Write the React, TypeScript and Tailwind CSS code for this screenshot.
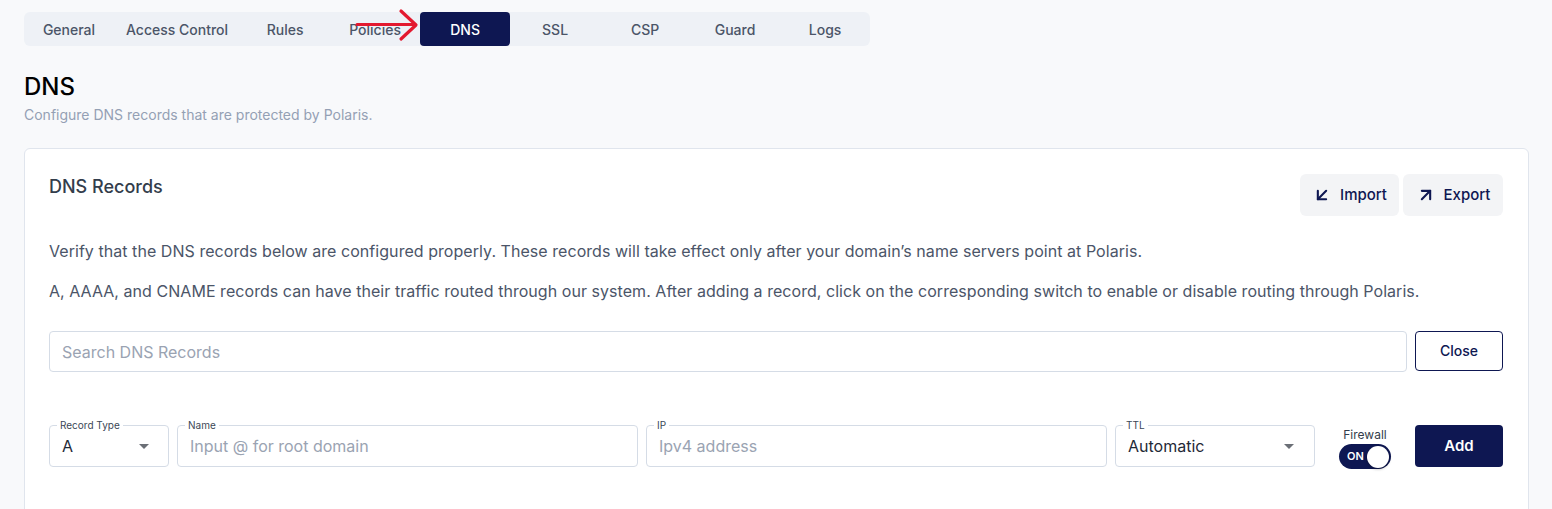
import { ArrowDownLeft, ArrowUpRight } from 'lucide-react'

const NAVY = 'bg-[#0e1752]'

const tabs = ['General', 'Access Control', 'Rules', 'Policies', 'DNS', 'SSL', 'CSP', 'Guard', 'Logs']

function TabBar({ active }: { active: string }) {
  return (
    <div className="relative inline-flex rounded-md bg-[#eef1f6]">
      {tabs.map((tab) => (
        <button
          key={tab}
          type="button"
          className={`h-[34px] min-w-[90px] rounded-[4px] px-3 pt-[2px] text-sm font-medium ${
            tab === active ? `${NAVY} text-white` : 'text-[#4b5568]'
          }`}
        >
          {tab}
        </button>
      ))}
      {/* annotation arrow pointing at the active tab */}
      <svg
        className="pointer-events-none absolute left-[330px] top-[-4px]"
        width="66"
        height="34"
        viewBox="0 0 66 34"
        fill="none"
      >
        <path d="M3 16.5 H61" stroke="#e3192f" strokeWidth="3" strokeLinecap="round" />
        <path d="M47 3 L62 17 L47 31" stroke="#e3192f" strokeWidth="3.2" strokeLinecap="round" strokeLinejoin="round" />
      </svg>
    </div>
  )
}

function OutlinedField({
  label,
  className,
  children,
}: {
  label: string
  className?: string
  children: React.ReactNode
}) {
  return (
    <div className={`relative flex h-[42px] items-center rounded-[4px] border border-[#d5dce6] bg-white ${className ?? ''}`}>
      <span className="absolute left-[7px] top-[-8px] bg-white px-[3px] text-[10px] leading-[14px] text-[#3b4756]">
        {label}
      </span>
      {children}
    </div>
  )
}

function Caret() {
  return (
    <svg width="12" height="7" viewBox="0 0 12 7" className="shrink-0">
      <path d="M1 1 L6 6 L11 1 Z" fill="#6b6f76" />
    </svg>
  )
}

export default function App() {
  return (
    <div
      className="min-h-screen bg-[#f8f9fb] px-6 pt-3"
      style={{ fontFamily: 'Inter, "Noto Sans", sans-serif' }}
    >
      <TabBar active="DNS" />

      <h1 className="mt-[25px] text-2xl font-medium leading-8 text-black">DNS</h1>
      <p className="mt-[2px] text-sm leading-5 text-[#94a0b4]">
        Configure DNS records that are protected by Polaris.
      </p>

      <section className="-mr-px mt-[23px] rounded-md border border-[#e0e5ed] bg-white pl-6 pr-[25px] pt-[25px] pb-16">
        <div className="flex items-start justify-between">
          <h2 className="text-lg font-medium leading-[26px] text-[#333d4b]">DNS Records</h2>
          <div className="flex gap-1">
            <button
              type="button"
              className="flex h-[42px] w-[99px] items-center justify-center gap-2 rounded-md bg-[#f3f4f6] text-[15px] font-medium text-[#0e1752]"
            >
              <ArrowDownLeft size={20} strokeWidth={2.5} />
              Import
            </button>
            <button
              type="button"
              className="flex h-[42px] w-[100px] items-center justify-center gap-2 rounded-md bg-[#f3f4f6] text-[15px] font-medium text-[#0e1752]"
            >
              <ArrowUpRight size={20} strokeWidth={2.5} />
              Export
            </button>
          </div>
        </div>

        <p className="mt-[23px] text-base leading-6 tracking-[0.003em] text-[#4b5568]">
          Verify that the DNS records below are configured properly. These records will take effect only after your
          domain’s name servers point at Polaris.
        </p>
        <p className="mt-4 text-base leading-6 tracking-[0.003em] text-[#4b5568]">
          A, AAAA, and CNAME records can have their traffic routed through our system. After adding a record, click on
          the corresponding switch to enable or disable routing through Polaris.
        </p>

        <div className="mt-7 flex gap-2">
          <input
            placeholder="Search DNS Records"
            className="h-[41px] flex-1 rounded-[4px] border border-[#d5dce6] px-3 text-base text-[#1f2937] placeholder:text-[#9aa3b2] focus:outline-none"
          />
          <button
            type="button"
            className="h-[40px] w-[88px] rounded-[4px] border border-[#0e1752] text-sm font-medium text-[#0e1752]"
          >
            Close
          </button>
        </div>

        <div className="mt-[53px] flex items-start gap-2">
          <OutlinedField label="Record Type" className="w-[120px] justify-between pl-3 pr-[18px]">
            <span className="text-base text-[#1f2937]">A</span>
            <Caret />
          </OutlinedField>
          <OutlinedField label="Name" className="flex-1 px-3">
            <span className="text-base text-[#9aa3b2]">Input @ for root domain</span>
          </OutlinedField>
          <OutlinedField label="IP" className="flex-1 px-3">
            <span className="text-base text-[#9aa3b2]">Ipv4 address</span>
          </OutlinedField>
          <OutlinedField label="TTL" className="w-[200px] justify-between pl-3 pr-[19px]">
            <span className="text-base text-[#1f2937]">Automatic</span>
            <Caret />
          </OutlinedField>

          <div className="flex w-[84px] flex-col items-center pt-[2px]">
            <span className="text-xs leading-4 text-[#333d4b]">Firewall</span>
            <div className={`mt-[1px] flex h-[25px] w-[52px] items-center justify-between rounded-full ${NAVY} pl-[8px] pr-[2px]`}>
              <span className="text-[11px] font-semibold text-white">ON</span>
              <span className="h-[22px] w-[22px] rounded-full bg-white shadow-[0_1px_3px_rgba(0,0,0,0.35)]" />
            </div>
          </div>

          <button
            type="button"
            className={`h-[42px] w-[88px] rounded-[4px] ${NAVY} text-[15px] font-semibold text-white`}
          >
            Add
          </button>
        </div>
      </section>
    </div>
  )
}
